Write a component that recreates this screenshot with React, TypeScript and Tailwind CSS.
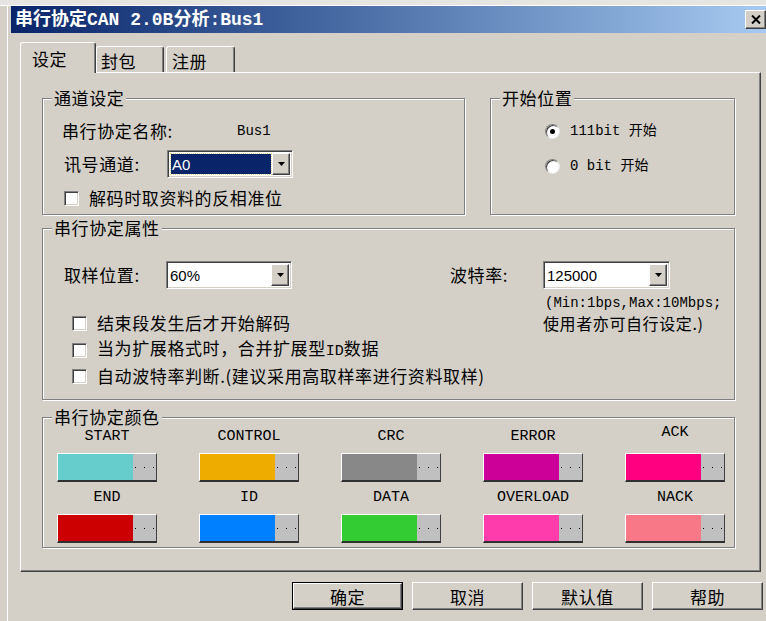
import React from "react";

// Win2000-style dialog: serial protocol CAN 2.0B analysis

const CJK = "font-['Noto_Sans_CJK_SC',sans-serif]";
const MONO = "font-['Liberation_Mono','Noto_Sans_CJK_SC',monospace]";
const SANS = "font-['Liberation_Sans',Arial,sans-serif]";

const RAISED =
  "border border-white border-r-[#404040] border-b-[#404040] shadow-[inset_-1px_-1px_0_#808080]";
const SUNKEN =
  "border border-[#808080] border-r-white border-b-white shadow-[inset_1px_1px_0_#404040,inset_-1px_-1px_0_#d4d0c8]";

function GroupBox({
  label,
  className = "",
  children,
}: {
  label: string;
  className?: string;
  children?: React.ReactNode;
}) {
  return (
    <div
      className={`relative border border-[#808080] shadow-[inset_1px_1px_0_#fff,1px_1px_0_#fff] ${className}`}
    >
      <span className="absolute -top-[11px] left-[9px] bg-[#d4d0c8] px-[2px] leading-[20px]">
        {label}
      </span>
      {children}
    </div>
  );
}

function DropArrow() {
  return (
    <div className={`w-[18px] shrink-0 bg-[#d4d0c8] flex items-center justify-center ${RAISED}`}>
      <svg width="7" height="4" viewBox="0 0 7 4">
        <polygon points="0,0 7,0 3.5,4" fill="#000" />
      </svg>
    </div>
  );
}

function Combo({ value, selected = false, className = "w-[126px]" }: { value: string; selected?: boolean; className?: string }) {
  return (
    <div className={`h-[28px] flex p-[2px] bg-white ${SUNKEN} ${className}`}>
      <div className="flex-1 flex bg-white">
        {selected ? (
          <div className="flex-1 m-[1px] bg-[#0a246a] outline-1 outline-dotted outline-[#e8d890] flex items-center">
            <span className={`${SANS} text-[15px] tracking-normal text-white pl-[1px] leading-none`}>{value}</span>
          </div>
        ) : (
          <div className="flex-1 flex items-center">
            <span className={`${SANS} text-[15px] tracking-normal text-black pl-[1px] leading-none`}>{value}</span>
          </div>
        )}
      </div>
      <DropArrow />
    </div>
  );
}

function Checkbox({ label, className = "" }: { label: React.ReactNode; className?: string }) {
  return (
    <div className={`flex items-center h-[20px] ${className}`}>
      <div className={`w-[15px] h-[15px] bg-white shrink-0 ${SUNKEN}`} />
      <span className="ml-[10px] leading-[20px] whitespace-nowrap">{label}</span>
    </div>
  );
}

function Radio({ checked, label, className = "" }: { checked?: boolean; label: string; className?: string }) {
  return (
    <div className={`flex items-center h-[20px] ${className}`}>
      <div className="w-[15px] h-[15px] rounded-full bg-white border border-[#808080] border-r-[#e8e8e8] border-b-[#e8e8e8] shadow-[inset_1px_1px_0_#404040] flex items-center justify-center shrink-0">
        {checked && <div className="w-[5px] h-[5px] rounded-full bg-black" />}
      </div>
      <span className={`${MONO} ml-[10px] text-[14px] tracking-normal leading-[20px] whitespace-pre`}>{label}</span>
    </div>
  );
}

function ColorButton({ color }: { color: string }) {
  return (
    <div className="w-[100px] h-[29px] flex border border-white border-r-[#404040] border-b-2 border-b-[#303030]">
      <div className="w-[75px]" style={{ backgroundColor: color }} />
      <div className="flex-1 bg-[#c0c0c0] flex items-center gap-[8px] pl-[2px]">
        <span className="w-px h-px bg-black" />
        <span className="w-px h-px bg-black" />
        <span className="w-px h-px bg-black" />
      </div>
    </div>
  );
}

function DialogButton({ label, isDefault = false }: { label: string; isDefault?: boolean }) {
  const inner = (
    <div className={`w-full h-full bg-[#d4d0c8] flex items-center justify-center ${RAISED}`}>
      <span className="leading-none">{label}</span>
    </div>
  );
  return isDefault ? (
    <div className="w-[111px] h-[28px] border border-black">{inner}</div>
  ) : (
    <div className="w-[111px] h-[28px]">{inner}</div>
  );
}

const COLORS: { label: string; color: string; lift?: boolean }[] = [
  { label: "START", color: "#66cccc" },
  { label: "CONTROL", color: "#eeac00" },
  { label: "CRC", color: "#888888" },
  { label: "ERROR", color: "#cc0099" },
  { label: "ACK", color: "#ff0080", lift: true },
  { label: "END", color: "#cc0000" },
  { label: "ID", color: "#0080ff" },
  { label: "DATA", color: "#33cc33" },
  { label: "OVERLOAD", color: "#ff3cac" },
  { label: "NACK", color: "#f87888" },
];

export default function App() {
  return (
    <div
      className={`w-[766px] h-[621px] bg-[#d4d0c8] overflow-hidden flex flex-col text-black text-[17px] tracking-[0.6px] ${CJK}`}
    >
      {/* window top frame */}
      <div className="h-[6px] bg-[#e7e5e1] border-b border-white" />

      <div className="flex-1 ml-[7px] border-l border-white pl-[3px] flex flex-col">
        {/* title bar */}
        <div className="h-[27px] flex items-center justify-between bg-gradient-to-r from-[#0a246a] to-[#a6caf0]">
          <span className={`${MONO} pl-[4px] text-[18px] font-bold tracking-normal text-white leading-none`}>
            串行协定CAN 2.0B分析:Bus1
          </span>
          <div className={`w-[21px] h-[19px] bg-[#d4d0c8] flex items-center justify-center ${RAISED}`}>
            <svg width="10" height="9" viewBox="0 0 10 9">
              <path d="M1 0.5 L9 8.5 M9 0.5 L1 8.5" stroke="#000" strokeWidth="2" />
            </svg>
          </div>
        </div>

        <div className="pl-[9px] flex flex-col">
          {/* tabs */}
          <div className="mt-[9px] h-[30px] flex items-end relative z-10">
            <div className="w-[76px] h-[31px] -mb-[1px] bg-[#d4d0c8] border-t border-l border-r border-white border-r-[#404040] rounded-t-[3px] shadow-[inset_-1px_0_0_#808080] pl-[11px] pt-[6px] leading-[20px]">
              设定
            </div>
            <div className="w-[68px] h-[26px] border-t border-l border-r border-white border-r-[#404040] rounded-t-[3px] shadow-[inset_-1px_0_0_#808080] pl-[4px] pt-[4px] leading-[20px]">
              封包
            </div>
            <div className="ml-[2px] w-[69px] h-[26px] border-t border-l border-r border-white border-r-[#404040] rounded-t-[3px] shadow-[inset_-1px_0_0_#808080] pl-[5px] pt-[4px] leading-[20px]">
              注册
            </div>
          </div>

          {/* tab panel */}
          <div className="w-[741px] h-[500px] border border-white border-r-[#404040] border-b-[#404040] shadow-[inset_-1px_-1px_0_#808080] pl-[21px] pt-[25px] flex flex-col">
            <div className="flex">
              <GroupBox label="通道设定" className="w-[423px] h-[117px] pl-[19px] pt-[22px]">
                <div className="flex items-center h-[20px]">
                  <span className="w-[175px] leading-[20px]">串行协定名称:</span>
                  <span className={`${MONO} text-[14px] tracking-normal`}>Bus1</span>
                </div>
                <div className="mt-[9px] ml-[2px] flex items-center">
                  <span className="w-[103px] leading-[20px]">讯号通道:</span>
                  <Combo value="A0" selected />
                </div>
                <Checkbox className="mt-[10px] ml-[2px]" label="解码时取资料的反相准位" />
              </GroupBox>

              <GroupBox label="开始位置" className="ml-[25px] w-[245px] h-[117px] pl-[54px] pt-[22px]">
                <Radio checked label="111bit 开始" />
                <Radio className="mt-[15px]" label="0 bit 开始" />
              </GroupBox>
            </div>

            <GroupBox label="串行协定属性" className="mt-[13px] w-[693px] h-[172px] pl-[21px] pt-[32px]">
              <div className="grid grid-cols-[386px_1fr]">
                <div className="flex items-center h-[28px]">
                  <span className="w-[102px] leading-[20px]">取样位置:</span>
                  <Combo value="60%" />
                </div>
                <div className="flex items-center h-[28px]">
                  <span className="w-[93px] leading-[20px]">波特率:</span>
                  <Combo value="125000" className="w-[127px]" />
                </div>
                <Checkbox className="self-start mt-[24px] ml-[8px]" label="结束段发生后才开始解码" />
                <div className="self-start mt-[7px] flex flex-col">
                  <span className={`${MONO} pl-[95px] text-[14px] tracking-normal leading-[14px] whitespace-nowrap`}>
                    (Min:1bps,Max:10Mbps;
                  </span>
                  <span className="mt-[5px] pl-[93px] text-[16px] leading-[16px] whitespace-nowrap">
                    使用者亦可自行设定.)
                  </span>
                </div>
                <Checkbox
                  className="col-span-2 mt-[7px] ml-[8px]"
                  label={
                    <>
                      当为扩展格式时，合并扩展型<span className={`${MONO} text-[15px] tracking-normal`}>ID</span>数据
                    </>
                  }
                />
                <Checkbox
                  className="col-span-2 mt-[6px] ml-[8px]"
                  label="自动波特率判断.(建议采用高取样率进行资料取样)"
                />
              </div>
            </GroupBox>

            <GroupBox label="串行协定颜色" className="mt-[17px] w-[693px] h-[131px] pl-[14px] pt-[10px]">
              <div className="grid grid-cols-[repeat(5,100px)] gap-x-[42px] gap-y-[7px]">
                {COLORS.map((c) => (
                  <div key={c.label} className="flex flex-col items-center">
                    <span
                      className={`${MONO} h-[18px] text-[15px] tracking-normal leading-[18px] ${c.lift ? "-mt-[4px] mb-[4px]" : ""}`}
                    >
                      {c.label}
                    </span>
                    <div className="mt-[7px]">
                      <ColorButton color={c.color} />
                    </div>
                  </div>
                ))}
              </div>
            </GroupBox>
          </div>

          {/* dialog buttons */}
          <div className="mt-[10px] flex justify-end gap-[9px] pr-[3px]">
            <DialogButton label="确定" isDefault />
            <DialogButton label="取消" />
            <DialogButton label="默认值" />
            <DialogButton label="帮助" />
          </div>
        </div>
      </div>
    </div>
  );
}
